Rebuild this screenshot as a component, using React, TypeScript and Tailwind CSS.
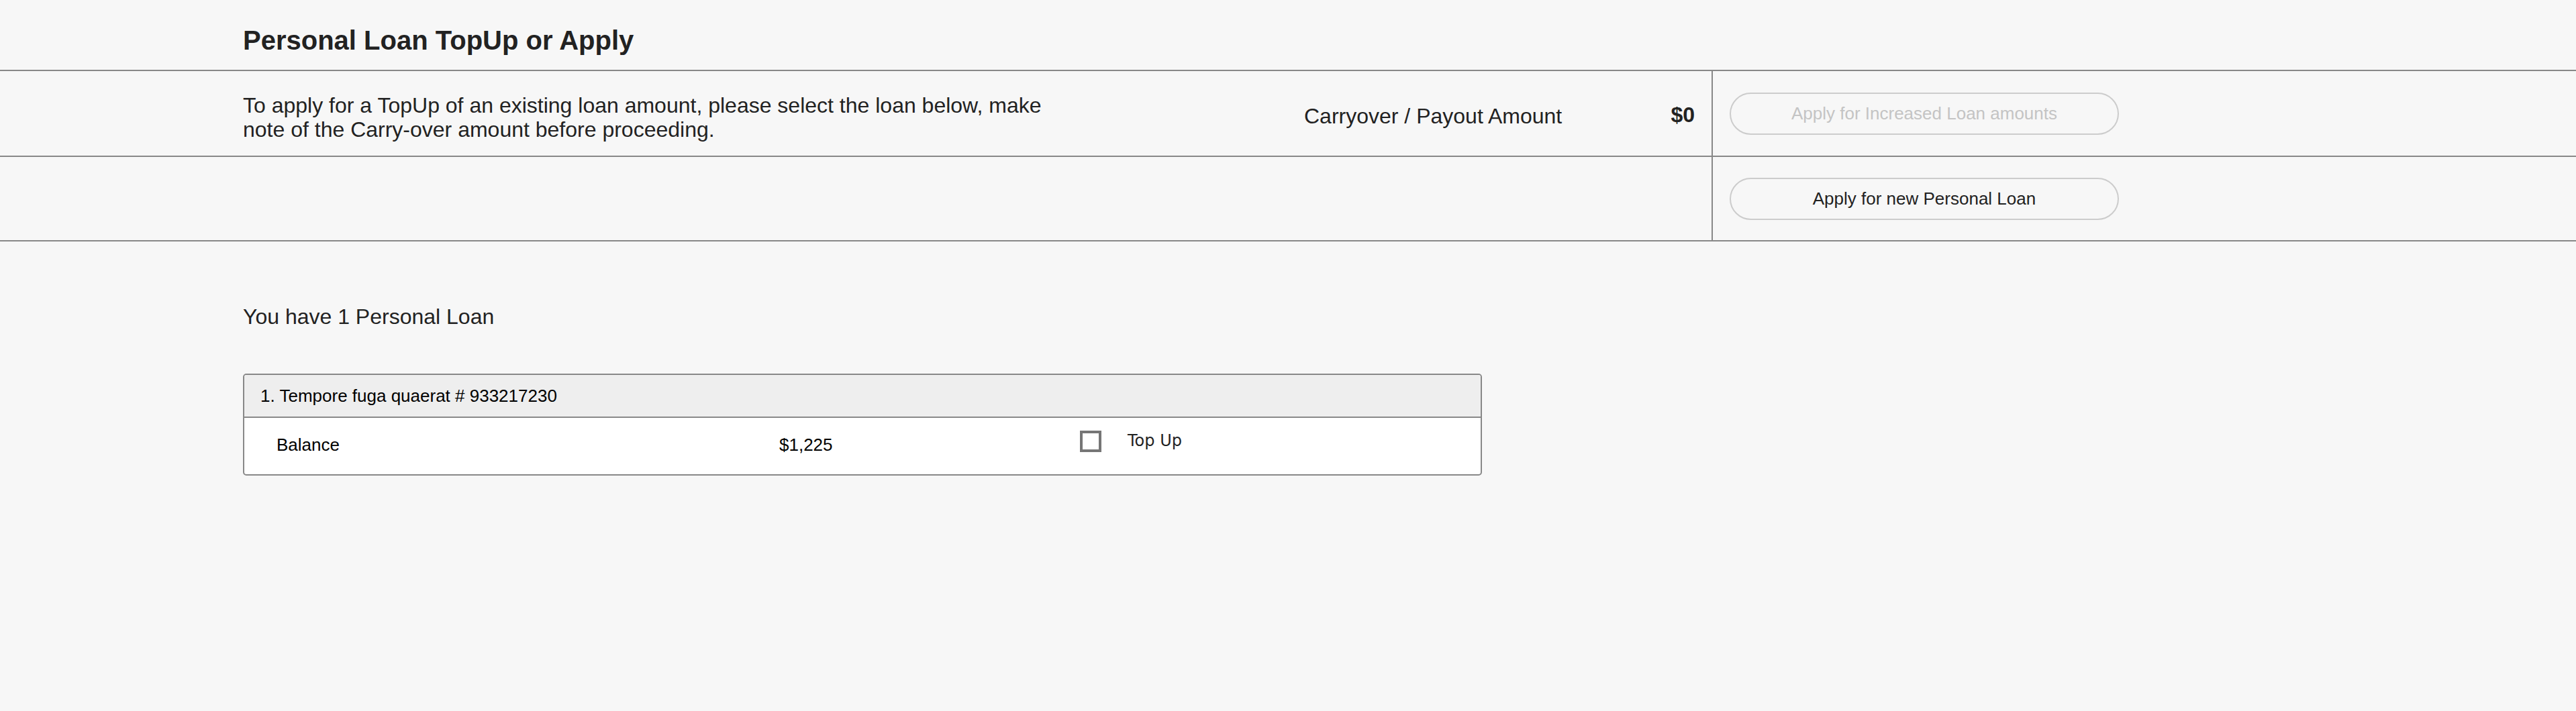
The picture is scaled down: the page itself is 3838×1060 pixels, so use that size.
export default function App() {
  return (
    <div className="min-h-screen bg-[#f7f7f7] text-[#222] font-['Liberation_Sans',Arial,sans-serif]">
      {/* Title */}
      <header className="h-[106px] pl-[362px] pt-[37px] border-b-2 border-[#888]">
        <h1 className="text-[40px] font-bold leading-[46px]">Personal Loan TopUp or Apply</h1>
      </header>

      {/* TopUp row */}
      <div className="flex h-[128px] border-b-2 border-[#888]">
        <div className="flex w-[2552px] items-center border-r-2 border-[#888] pl-[362px] pr-[25px]">
          <p className="w-[1240px] pt-[11px] text-[32px] leading-[36px]">
            To apply for a TopUp of an existing loan amount, please select the loan below, make note of the
            Carry-over amount before proceeding.
          </p>
          <span className="ml-[341px] mt-[8px] text-[32px]">Carryover / Payout Amount</span>
          <span className="ml-auto mt-[4px] text-[32px] font-bold">$0</span>
        </div>
        <div className="flex items-center pl-[25px]">
          <button
            disabled
            className="h-[63px] w-[580px] rounded-full border-2 border-[#ccc] text-[26px] text-[#c4c4c4]"
          >
            Apply for Increased Loan amounts
          </button>
        </div>
      </div>

      {/* New loan row */}
      <div className="flex h-[126px] border-b-2 border-[#888]">
        <div className="w-[2552px] border-r-2 border-[#888]" />
        <div className="flex items-center pl-[25px]">
          <button className="h-[63px] w-[580px] rounded-full border-2 border-[#ccc] text-[26px] text-[#222]">
            Apply for new Personal Loan
          </button>
        </div>
      </div>

      {/* Loans */}
      <section className="pl-[362px] pt-[94px]">
        <h2 className="text-[32px] leading-[36px]">You have 1 Personal Loan</h2>

        <div className="mt-[67px] w-[1846px] overflow-hidden rounded-[5px] border-2 border-[#888] bg-white text-black">
          <div className="flex h-[64px] items-center border-b-2 border-[#888] bg-[#eee] pl-[24px] text-[26px]">
            1. Tempore fuga quaerat # 933217230
          </div>
          <div className="pt-[19px] pb-[33px] pl-[48px]">
            <div className="flex h-[32px] items-center text-[26px]">
              <span className="w-[749px] pt-[11px]">Balance</span>
              <span className="w-[448px] pt-[11px]">$1,225</span>
              <label className="flex items-center gap-[39px]">
                <span className="block h-[32px] w-[32px] border-[4px] border-[#767676] bg-white" />
                <span className="font-['DejaVu_Sans',sans-serif] text-[24px] text-[#222] -mt-[2px]">Top Up</span>
              </label>
            </div>
          </div>
        </div>
      </section>
    </div>
  );
}
